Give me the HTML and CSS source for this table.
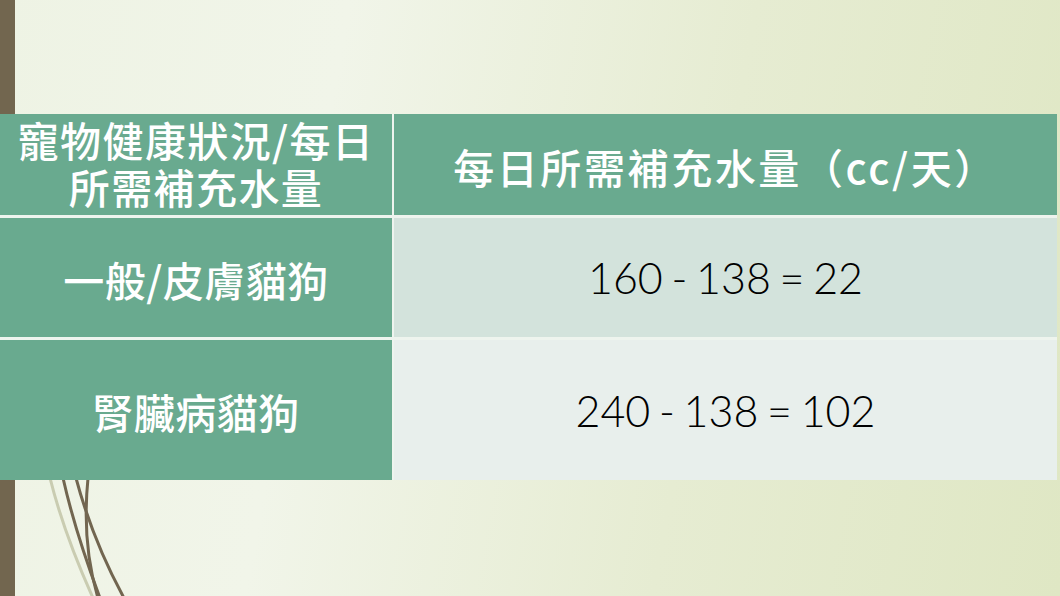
FILE: index.html
```html
<!DOCTYPE html>
<html lang="zh-Hant">
<head>
<meta charset="utf-8">
<link rel="stylesheet" href="styles.css">
</head>
<body>
<div class="slide">
  <svg class="deco" width="140" height="120" viewBox="0 0 140 120">
    <path d="M50 0 C 60 40, 75 80, 93 120" stroke="#b9bb9a" stroke-width="3" fill="none" opacity="0.7"/>
    <path d="M63 0 C 72 40, 85 80, 100 120" stroke="#726650" stroke-width="3" fill="none"/>
    <path d="M76 0 C 88 45, 105 85, 124 120" stroke="#726650" stroke-width="3" fill="none"/>
    <path d="M88 0 C 84 40, 86 80, 98 120" stroke="#726650" stroke-width="3" fill="none"/>
  </svg>
  <div class="spacer"></div>
  <div class="table">
    <div class="cell head left">
      <div class="hline">寵物健康狀況/每日</div>
      <div class="hline">所需補充水量</div>
    </div>
    <div class="cell head right"><span>每日所需補充水量（cc/天）</span></div>
    <div class="cell label">一般/皮膚貓狗</div>
    <div class="cell value odd">160 - 138 = 22</div>
    <div class="cell label">腎臟病貓狗</div>
    <div class="cell value even">240 - 138 = 102</div>
  </div>
</div>
</body>
</html>
```
FILE: styles.css
```css
html, body {
  margin: 0;
  padding: 0;
}
body {
  width: 1060px;
  height: 596px;
  overflow: hidden;
  font-family: "Noto Sans CJK TC", sans-serif;
}
.slide {
  position: relative;
  width: 1060px;
  height: 596px;
  display: flex;
  flex-direction: column;
  background:
    linear-gradient(to right, #72664f 0, #72664f 15px, transparent 15px),
    linear-gradient(100deg, #eef3e4 0%, #f1f5e9 30%, #e6ecd2 65%, #dfe7c4 100%);
}
.deco {
  position: absolute;
  left: 0;
  top: 478px;
}
.spacer {
  height: 114px;
  flex: none;
}
.table {
  position: relative;
  width: 1057px;
  display: grid;
  grid-template-columns: 392px 1fr;
  grid-template-rows: 101px 119px 140px;
  column-gap: 2px;
  row-gap: 3px;
  background: #eef4ee;
}
.cell {
  display: flex;
  align-items: center;
  justify-content: center;
  text-align: center;
}
.head, .label {
  background: #69aa8f;
  color: #ffffff;
  font-weight: 500;
  font-size: 41px;
}
.head.left {
  flex-direction: column;
  letter-spacing: 1.4px;
  padding-bottom: 4px;
}
.hline {
  height: 47px;
  line-height: 47px;
}
.head.right {
  font-size: 41px;
  letter-spacing: 2.6px;
  padding-top: 2px;
}
.label {
  padding-top: 2px;
  letter-spacing: 0.5px;
}
.value {
  font-family: "Lato", "Noto Sans CJK TC", sans-serif;
  font-size: 43px;
  color: #000000;
  font-weight: 300;
  word-spacing: -3px;
}
.odd {
  background: #d3e3dc;
}
.even {
  background: #e8efec;
}
```
